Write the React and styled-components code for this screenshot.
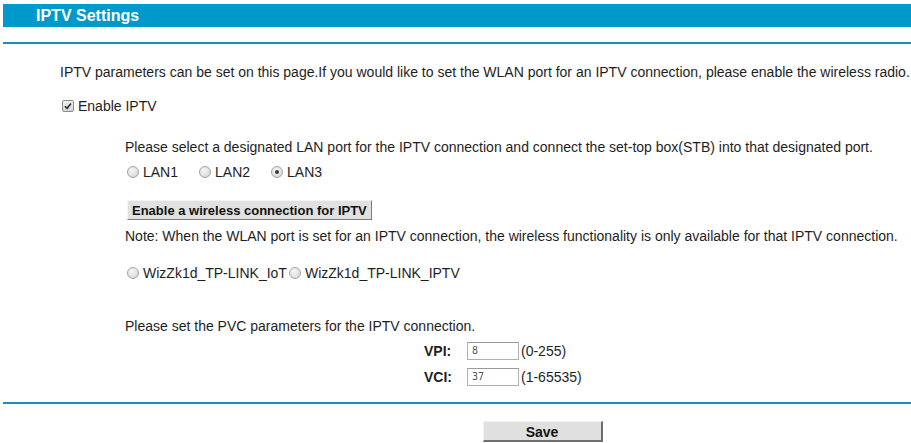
import React from 'react';
import styled, { createGlobalStyle } from 'styled-components';

const GlobalStyle = createGlobalStyle`
  html, body {
    margin: 0;
    padding: 0;
    background: #ffffff;
  }
  body {
    font-family: "Liberation Sans", Arial, sans-serif;
    font-size: 14px;
    color: #1e1e1e;
  }
`;

// Page frame
const Page = styled.div`
  width: 911px;
  padding-top: 4px;
`;

const TitleBar = styled.div`
  margin-left: 3px;
  height: 23px;
  line-height: 23px;
  padding-left: 33px;
  background: #0099cc;
  color: #ffffff;
  font-weight: bold;
  font-size: 16px;
`;

const Rule = styled.div`
  margin: ${({ $top }) => $top}px 0 0 3px;
  height: 2px;
  background: #1a91b2;
`;

const Content = styled.div`
  padding-left: 60px;
`;

const Line = styled.div`
  height: 16px;
  line-height: 16px;
  margin-top: ${({ $top }) => $top}px;
  padding-left: ${({ $indent }) => $indent || 0}px;
  white-space: nowrap;
`;

const Row = styled.div`
  display: flex;
  align-items: center;
  height: 16px;
  margin-top: ${({ $top }) => $top}px;
  padding-left: ${({ $indent }) => $indent || 0}px;
  white-space: nowrap;
`;

// Form controls
const CheckBox = styled.span`
  box-sizing: border-box;
  width: 12px;
  height: 12px;
  margin: 0 4px 0 2px;
  border: 1px solid #8e8e8e;
  border-radius: 2px;
  background: linear-gradient(#f2f2f2, #d4d4d4);
  display: inline-flex;
  align-items: center;
  justify-content: center;
`;

const Radio = styled.span`
  box-sizing: border-box;
  width: 12px;
  height: 12px;
  margin: 0 4px 0 2px;
  border: 1px solid #a4a4a4;
  border-radius: 50%;
  background: radial-gradient(circle at 40% 35%, #f6f6f6, #d2d2d2);
  display: inline-flex;
  align-items: center;
  justify-content: center;

  &::after {
    content: '';
    width: 4px;
    height: 4px;
    border-radius: 50%;
    background: #3a3a3a;
    display: ${({ $checked }) => ($checked ? 'block' : 'none')};
  }
`;

const RadioLabel = styled.span`
  margin-right: ${({ $gap }) => $gap || 0}px;
`;

const GrayButton = styled.div`
  display: inline-block;
  box-sizing: border-box;
  height: 20px;
  line-height: 19px;
  padding: 0 4px;
  background: #e1e1e1;
  border-right: 1px solid #7a7a7a;
  border-bottom: 1px solid #7a7a7a;
  border-top: 1px solid #f4f4f4;
  border-left: 1px solid #f4f4f4;
  font-weight: bold;
  font-size: 13px;
  color: #111;
`;

const ButtonRow = styled.div`
  margin-top: ${({ $top }) => $top}px;
  padding-left: 67px;
  height: 20px;
`;

const ParamGrid = styled.div`
  display: grid;
  grid-template-columns: 43px 54px auto;
  row-gap: 8px;
  align-items: center;
  margin-top: 8px;
  padding-left: 364px;
`;

const ParamLabel = styled.span`
  font-weight: bold;
  font-size: 14px;
`;

const TextInput = styled.div`
  box-sizing: border-box;
  width: 52px;
  height: 18px;
  border: 1px solid #b0b0b0;
  border-top-color: #9a9a9a;
  background: #fff;
  padding-left: 4px;
  font-family: "DejaVu Sans Mono", monospace;
  font-size: 10px;
  line-height: 16px;
  color: #555;
`;

const Footer = styled.div`
  display: flex;
  justify-content: center;
  padding: 17px 0 0 174px;
`;

const SaveButton = styled.div`
  box-sizing: border-box;
  width: 120px;
  height: 21px;
  line-height: 20px;
  text-align: center;
  background: #e0e0e0;
  border-right: 2px solid #6e6e6e;
  border-bottom: 2px solid #6e6e6e;
  border-top: 1px solid #f2f2f2;
  border-left: 1px solid #f2f2f2;
  font-family: "Liberation Sans Narrow", "Arial Narrow", "Liberation Sans", sans-serif;
  font-weight: bold;
  font-size: 14px;
  color: #111;
`;

const Check = () => (
  <svg width="8" height="8" viewBox="0 0 8 8">
    <path d="M1 4.2 L3.1 6.3 L7 1.6" fill="none" stroke="#2a2a2a" strokeWidth="1.6" />
  </svg>
);

const App = () => (
  <>
    <GlobalStyle />
    <Page>
      <TitleBar>IPTV Settings</TitleBar>
      <Rule $top={15} />
      <Content>
        <Line $top={20}>
          IPTV parameters can be set on this page.If you would like to set the WLAN port for an IPTV connection, please enable the wireless radio.
        </Line>
        <Row $top={18}>
          <CheckBox><Check /></CheckBox>
          Enable IPTV
        </Row>
        <Line $top={25} $indent={65}>
          Please select a designated LAN port for the IPTV connection and connect the set-top box(STB) into that designated port.
        </Line>
        <Row $top={9} $indent={65}>
          <Radio />
          <RadioLabel $gap={19}>LAN1</RadioLabel>
          <Radio />
          <RadioLabel $gap={19}>LAN2</RadioLabel>
          <Radio $checked />
          <RadioLabel>LAN3</RadioLabel>
        </Row>
        <ButtonRow $top={20}>
          <GrayButton>Enable a wireless connection for IPTV</GrayButton>
        </ButtonRow>
        <Line $top={8} $indent={65}>
          Note: When the WLAN port is set for an IPTV connection, the wireless functionality is only available for that IPTV connection.
        </Line>
        <Row $top={21} $indent={65}>
          <Radio />
          <RadioLabel>WizZk1d_TP-LINK_IoT</RadioLabel>
          <Radio />
          <RadioLabel>WizZk1d_TP-LINK_IPTV</RadioLabel>
        </Row>
        <Line $top={37} $indent={65}>
          Please set the PVC parameters for the IPTV connection.
        </Line>
        <ParamGrid>
          <ParamLabel>VPI:</ParamLabel>
          <TextInput>8</TextInput>
          <span>(0-255)</span>
          <ParamLabel>VCI:</ParamLabel>
          <TextInput>37</TextInput>
          <span>(1-65535)</span>
        </ParamGrid>
      </Content>
      <Rule $top={16} />
      <Footer>
        <SaveButton>Save</SaveButton>
      </Footer>
    </Page>
  </>
);

export default App;
